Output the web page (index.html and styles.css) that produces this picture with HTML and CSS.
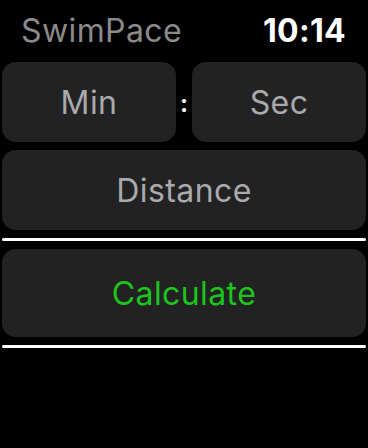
FILE: index.html
```html
<!DOCTYPE html>
<html lang="en">
<head>
    <meta charset="UTF-8">
    <meta name="viewport" content="width=device-width, initial-scale=1.0">
    <title>SwimPace</title>
    <link rel="stylesheet" href="styles.css">
</head>
<body>
    <div class="screen">
        <div class="header">
            <span class="app-title">SwimPace</span>
            <span class="clock">10:14</span>
        </div>

        <div class="pace-row">
            <div class="field">Min</div>
            <div class="colon">:</div>
            <div class="field">Sec</div>
        </div>

        <div class="field wide">Distance</div>
        <div class="rule"></div>

        <div class="field wide calc">Calculate</div>
        <div class="rule"></div>
    </div>
</body>
</html>
```

FILE: styles.css
```css
body {
    margin: 0;
    background: #000;
    font-family: 'Inter', 'Liberation Sans', sans-serif;
}
.screen {
    width: 368px;
    height: 448px;
    padding: 0 2px;
    box-sizing: border-box;
    display: flex;
    flex-direction: column;
}
.header {
    display: flex;
    justify-content: space-between;
    align-items: baseline;
    height: 62px;
    padding: 11px 20px 0 19px;
    box-sizing: border-box;
    line-height: 40px;
}
.app-title {
    color: #8a8a8a;
    font-size: 32px;
    letter-spacing: 0.4px;
}
.clock {
    color: #fff;
    font-size: 32px;
    font-weight: 700;
    letter-spacing: 0.3px;
}
.pace-row {
    display: flex;
    height: 80px;
}
.field {
    background: #222;
    border-radius: 14px;
    color: #a9a9ae;
    font-size: 32px;
    letter-spacing: 0.4px;
    display: flex;
    align-items: center;
    justify-content: center;
    flex: 1;
    height: 80px;
}
.colon {
    width: 16px;
    color: #fff;
    font-size: 24px;
    font-weight: 700;
    padding-top: 3px;
    display: flex;
    align-items: center;
    justify-content: center;
}
.wide {
    flex: none;
    margin-top: 8px;
}
.calc {
    height: 88px;
    color: #1ec41e;
}
.rule {
    height: 3px;
    background: #fff;
    border-radius: 2px;
    margin-top: 8px;
}
```
